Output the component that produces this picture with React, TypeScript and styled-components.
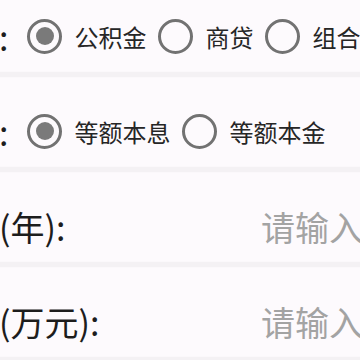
import React, { useState } from "react";
import styled, { createGlobalStyle } from "styled-components";

interface Option {
	value: string;
	text: string;
}

const GlobalStyle = createGlobalStyle`
	html, body {
		margin: 0;
		padding: 0;
		background-color: #fdfafd;
		overflow: hidden;
	}
	body {
		font-family: "Noto Sans CJK SC", "Noto Sans", sans-serif;
	}
`;

const RadioRow = ({
	label,
	options,
	value,
	onChange,
}: {
	label: string;
	options: Option[];
	value: string;
	onChange: (v: string) => void;
}) => (
	<Row>
		<Label>{label}</Label>
		<RadioGroup>
			{options.map((o) => (
				<RadioItem key={o.value} onClick={() => onChange(o.value)}>
					<Circle $checked={value === o.value} />
					<OptionText>{o.text}</OptionText>
				</RadioItem>
			))}
		</RadioGroup>
	</Row>
);

const InputRow = ({ label, placeholder }: { label: string; placeholder: string }) => (
	<FieldRow>
		<Label>{label}</Label>
		<Field placeholder={placeholder} inputMode="decimal" />
	</FieldRow>
);

const App = () => {
	const [loanType, setLoanType] = useState("fund");
	const [payType, setPayType] = useState("interest");
	return (
		<Viewport>
			<GlobalStyle />
			<Form>
				<RadioRow
					label="贷款类型:"
					value={loanType}
					onChange={setLoanType}
					options={[
						{ value: "fund", text: "公积金" },
						{ value: "business", text: "商贷" },
						{ value: "mix", text: "组合贷" },
					]}
				/>
				<Divider />
				<RadioRow
					label="还款方式:"
					value={payType}
					onChange={setPayType}
					options={[
						{ value: "interest", text: "等额本息" },
						{ value: "principal", text: "等额本金" },
					]}
				/>
				<Divider />
				<InputRow label="贷款期限(年):" placeholder="请输入贷款期限" />
				<Divider />
				<InputRow label="贷款金额(万元):" placeholder="请输入贷款金额" />
				<Divider />
			</Form>
		</Viewport>
	);
};

const Viewport = styled.div`
	width: 360px;
	height: 360px;
	overflow: hidden;
`;
const Form = styled.div`
	width: 660px;
	margin-left: -137px;
	margin-top: -18px;
	display: flex;
	flex-direction: column;
`;
const Row = styled.div`
	height: 90px;
	box-sizing: border-box;
	padding-top: 18px;
	display: flex;
	flex-direction: row;
	align-items: center;
`;
const FieldRow = styled(Row)`
	display: grid;
	grid-template-columns: 398px 1fr;
`;
const Label = styled.span`
	font-size: 34px;
	color: #1d1d1d;
	white-space: nowrap;
	flex-shrink: 0;
`;
const RadioGroup = styled.div`
	display: flex;
	align-items: center;
	gap: 12px;
	margin-left: 19px;
`;
const RadioItem = styled.div`
	display: flex;
	align-items: center;
	gap: 12px;
	cursor: pointer;
	user-select: none;
`;
const Circle = styled.span<{ $checked: boolean }>`
	width: 35px;
	height: 35px;
	box-sizing: border-box;
	border-radius: 50%;
	border: 3.5px solid #727272;
	display: flex;
	align-items: center;
	justify-content: center;
	flex-shrink: 0;
	&::after {
		content: "";
		width: 18px;
		height: 18px;
		border-radius: 50%;
		background-color: #7a7a7a;
		display: ${(p) => (p.$checked ? "block" : "none")};
	}
`;
const OptionText = styled.span`
	font-size: 24px;
	color: #262626;
	white-space: nowrap;
`;
const Field = styled.input`
	width: 100%;
	min-width: 0;
	border: none;
	outline: none;
	background: transparent;
	padding: 0;
	font-family: "Noto Sans CJK SC", sans-serif;
	font-size: 34px;
	color: #1d1d1d;
	&::placeholder {
		color: #a3a3a3;
	}
`;
const Divider = styled.div`
	height: 5px;
	background-color: #f4f1f4;
	box-shadow: 0 0 2px #f6f3f6;
`;

export default App;
